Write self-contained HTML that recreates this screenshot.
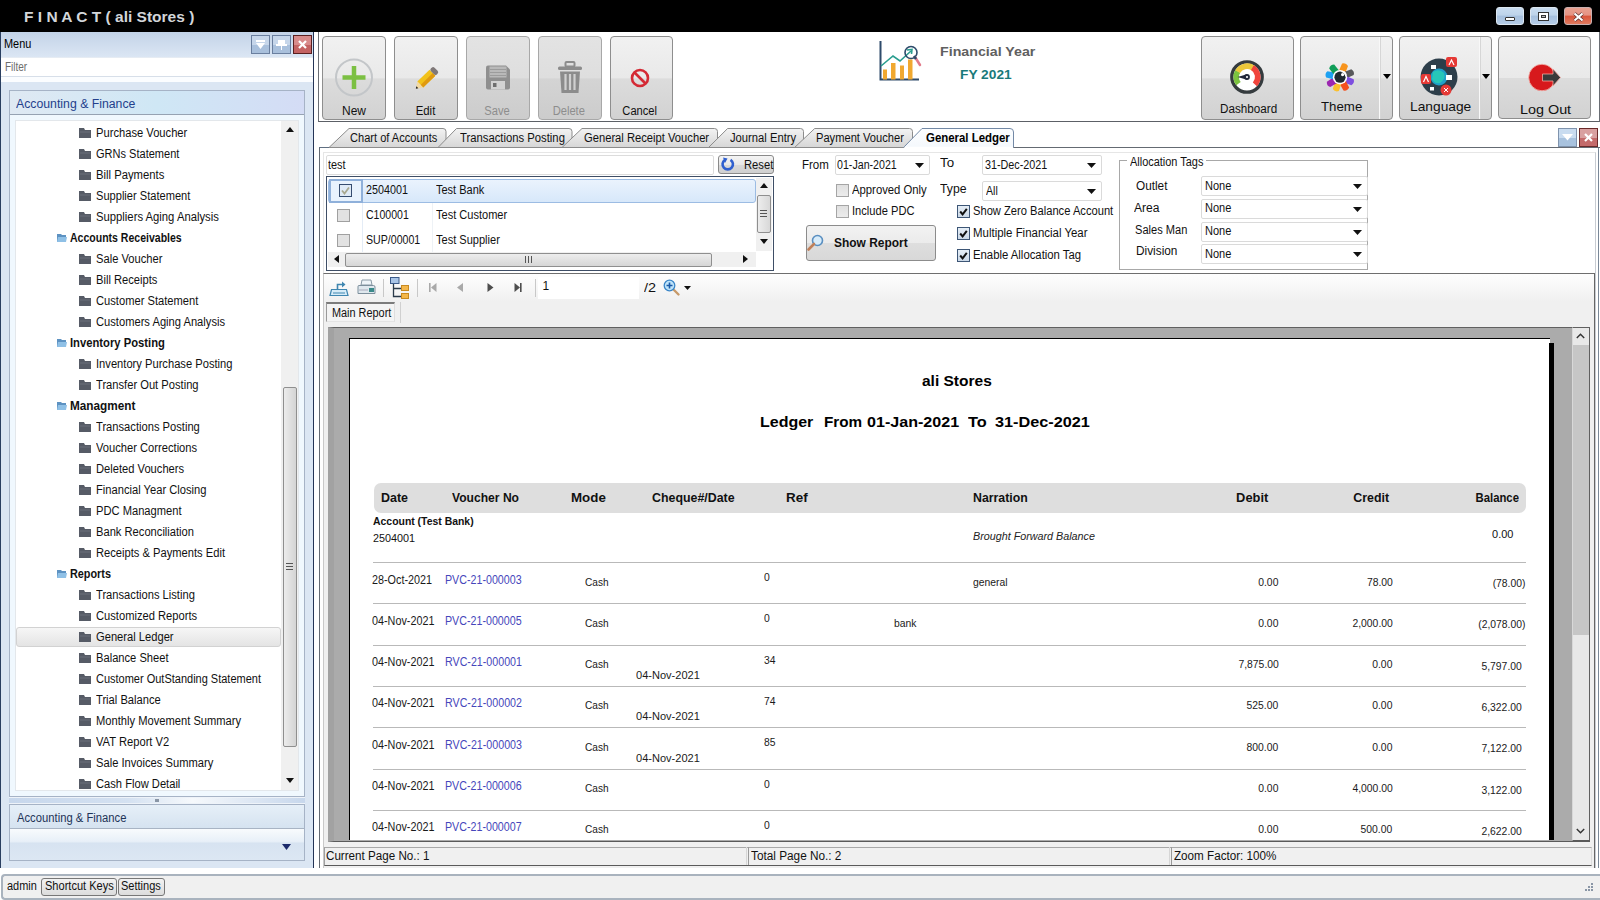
<!DOCTYPE html>
<html><head><meta charset="utf-8">
<style>
*{box-sizing:border-box;margin:0;padding:0}
html,body{width:1600px;height:900px;overflow:hidden;background:#fff;font-family:"Liberation Sans",sans-serif;font-size:12px;color:#000}
.a{position:absolute}
.t{position:absolute;white-space:nowrap;line-height:1;transform-origin:0 50%}
svg{position:absolute;overflow:visible}
</style></head><body>
<div class="a" style="left:0;top:0;width:1600px;height:32px;background:#000"></div>
<div class="t" style="top:9.2px;font-size:15px;font-weight:bold;color:#d3d6da;left:24.0px;transform:scaleX(1.034);">F I N A C T ( ali Stores )</div>
<div class="a" style="left:1496px;top:7px;width:28px;height:18px;border-radius:3px;background:linear-gradient(#c8dcf0 0%,#bdd3ea 45%,#a6c0de 50%,#b4cce6 100%);border:1px solid #dce6f0"></div>
<div class="a" style="left:1505px;top:17px;width:10px;height:4px;background:#fff;border:1px solid #333;border-radius:1px"></div>
<div class="a" style="left:1530px;top:7px;width:28px;height:18px;border-radius:3px;background:linear-gradient(#c8dcf0 0%,#bdd3ea 45%,#a6c0de 50%,#b4cce6 100%);border:1px solid #dce6f0"></div>
<div class="a" style="left:1538px;top:12px;width:11px;height:9px;background:#fff;border:1px solid #333"></div>
<div class="a" style="left:1541px;top:15px;width:5px;height:3px;background:#bbb;border:1px solid #333"></div>
<div class="a" style="left:1564px;top:7px;width:28px;height:18px;border-radius:3px;background:linear-gradient(#e8a090 0%,#e59383 45%,#d9543a 50%,#e07a5e 100%);border:1px solid #c9b0b0"></div>
<svg style="left:1573px;top:12px" width="11" height="10"><path d="M1.5 1.5L9.5 8.5M9.5 1.5L1.5 8.5" stroke="#5a3030" stroke-width="3.6"/><path d="M1.5 1.5L9.5 8.5M9.5 1.5L1.5 8.5" stroke="#fff" stroke-width="2.2"/></svg>
<div class="a" style="left:0;top:32px;width:314px;height:837px;background:#dbe6f3;border-left:1px solid #2a3f60;border-right:1px solid #243456"></div>
<div class="a" style="left:1px;top:32px;width:312px;height:25px;background:linear-gradient(#c3d3e7,#dbe6f4)"></div>
<div class="t" style="top:38.3px;font-size:12px;left:3.5px;transform:scaleX(0.909);">Menu</div>
<div class="a" style="left:251px;top:35px;width:19px;height:19px;background:linear-gradient(#c6d6ea 50%,#a9c0dc 50%);border:1px solid #6a7f9f"></div>
<div class="a" style="left:272px;top:35px;width:19px;height:19px;background:linear-gradient(#c6d6ea 50%,#a9c0dc 50%);border:1px solid #6a7f9f"></div>
<div class="a" style="left:293px;top:35px;width:19px;height:19px;background:linear-gradient(#d88b8b 50%,#c46363 50%);border:1px solid #5a2020"></div>
<div class="a" style="left:256px;top:40px;width:9px;height:2px;background:#fff"></div>
<svg style="left:256px;top:43px" width="9" height="7"><path d="M0 0H9L4.5 6Z" fill="#fff"/></svg>
<div class="a" style="left:278px;top:40px;width:7px;height:4px;background:#fff"></div>
<div class="a" style="left:276px;top:44px;width:11px;height:2px;background:#fff"></div>
<div class="a" style="left:281px;top:46px;width:1px;height:4px;background:#fff"></div>
<svg style="left:298px;top:40px" width="9" height="9"><path d="M1 1L8 8M8 1L1 8" stroke="#fff" stroke-width="2.2"/></svg>
<div class="a" style="left:1px;top:57px;width:312px;height:20px;background:#fff;border-top:1px solid #e6ecf3;border-bottom:1px solid #d7dfe9"></div>
<div class="t" style="top:60.8px;font-size:12px;color:#6d6d6d;left:4.5px;transform:scaleX(0.832);">Filter</div>
<div class="a" style="left:1px;top:77px;width:312px;height:5px;background:#fbfdff"></div>
<div class="a" style="left:9px;top:90px;width:296px;height:707px;background:#f0f8fe;border:1px solid #a6b3c6"></div>
<div class="a" style="left:10px;top:91px;width:294px;height:23px;background:linear-gradient(90deg,#dfe9f3 0%,#cfe7f5 50%,#d4dcf5 100%)"></div>
<div class="a" style="left:10px;top:114px;width:294px;height:1px;background:#96a2b2"></div>
<div class="t" style="top:98.4px;font-size:12.5px;color:#233f8c;left:15.5px;transform:scaleX(0.982);">Accounting &amp; Finance</div>
<div class="a" style="left:15px;top:120px;width:284px;height:671px;background:#fff;border:1px solid #e3e7eb"></div>
<div class="a" style="left:281px;top:121px;width:17px;height:669px;background:#f0f0f0"></div>
<svg style="left:286px;top:127px" width="8" height="5"><path d="M0 5H8L4 0Z" fill="#111"/></svg>
<svg style="left:286px;top:778px" width="8" height="5"><path d="M0 0H8L4 5Z" fill="#111"/></svg>
<div class="a" style="left:283px;top:387px;width:14px;height:360px;background:linear-gradient(90deg,#ececec,#d4d4d4);border:1px solid #8f8f8f;border-radius:2px"></div>
<div class="a" style="left:286px;top:563px;width:7px;height:1px;background:#555"></div>
<div class="a" style="left:286px;top:566px;width:7px;height:1px;background:#555"></div>
<div class="a" style="left:286px;top:569px;width:7px;height:1px;background:#555"></div>
<div class="a" style="left:16px;top:627px;width:265px;height:20px;background:linear-gradient(#f6f6f6,#e4e4e4);border:1px solid #d2d2d2;border-radius:3px"></div>
<svg style="left:79px;top:128px" width="12" height="10"><path d="M0 0H5L6 2H12V10H0Z" fill="#565b66"/><path d="M1 4H11" stroke="#6b707a" stroke-width="1"/></svg>
<div class="t" style="top:126.8px;font-size:12px;color:#111;left:95.5px;transform:scaleX(0.931);">Purchase Voucher</div>
<svg style="left:79px;top:149px" width="12" height="10"><path d="M0 0H5L6 2H12V10H0Z" fill="#565b66"/><path d="M1 4H11" stroke="#6b707a" stroke-width="1"/></svg>
<div class="t" style="top:147.8px;font-size:12px;color:#111;left:95.5px;transform:scaleX(0.919);">GRNs Statement</div>
<svg style="left:79px;top:170px" width="12" height="10"><path d="M0 0H5L6 2H12V10H0Z" fill="#565b66"/><path d="M1 4H11" stroke="#6b707a" stroke-width="1"/></svg>
<div class="t" style="top:168.8px;font-size:12px;color:#111;left:95.5px;transform:scaleX(0.940);">Bill Payments</div>
<svg style="left:79px;top:191px" width="12" height="10"><path d="M0 0H5L6 2H12V10H0Z" fill="#565b66"/><path d="M1 4H11" stroke="#6b707a" stroke-width="1"/></svg>
<div class="t" style="top:189.8px;font-size:12px;color:#111;left:95.5px;transform:scaleX(0.924);">Supplier Statement</div>
<svg style="left:79px;top:212px" width="12" height="10"><path d="M0 0H5L6 2H12V10H0Z" fill="#565b66"/><path d="M1 4H11" stroke="#6b707a" stroke-width="1"/></svg>
<div class="t" style="top:210.8px;font-size:12px;color:#111;left:95.5px;transform:scaleX(0.940);">Suppliers Aging Analysis</div>
<svg style="left:57px;top:234px" width="10" height="8"><path d="M0 0H4L5 1H9V8H0Z" fill="#5d92c2"/><path d="M1 3H10L9 8H0Z" fill="#8fc0e6"/></svg>
<div class="t" style="top:231.8px;font-size:12px;font-weight:bold;color:#111;left:69.5px;transform:scaleX(0.877);">Accounts Receivables</div>
<svg style="left:79px;top:254px" width="12" height="10"><path d="M0 0H5L6 2H12V10H0Z" fill="#565b66"/><path d="M1 4H11" stroke="#6b707a" stroke-width="1"/></svg>
<div class="t" style="top:252.8px;font-size:12px;color:#111;left:95.5px;transform:scaleX(0.930);">Sale Voucher</div>
<svg style="left:79px;top:275px" width="12" height="10"><path d="M0 0H5L6 2H12V10H0Z" fill="#565b66"/><path d="M1 4H11" stroke="#6b707a" stroke-width="1"/></svg>
<div class="t" style="top:273.8px;font-size:12px;color:#111;left:95.5px;transform:scaleX(0.930);">Bill Receipts</div>
<svg style="left:79px;top:296px" width="12" height="10"><path d="M0 0H5L6 2H12V10H0Z" fill="#565b66"/><path d="M1 4H11" stroke="#6b707a" stroke-width="1"/></svg>
<div class="t" style="top:294.8px;font-size:12px;color:#111;left:95.5px;transform:scaleX(0.930);">Customer Statement</div>
<svg style="left:79px;top:317px" width="12" height="10"><path d="M0 0H5L6 2H12V10H0Z" fill="#565b66"/><path d="M1 4H11" stroke="#6b707a" stroke-width="1"/></svg>
<div class="t" style="top:315.8px;font-size:12px;color:#111;left:95.5px;transform:scaleX(0.930);">Customers Aging Analysis</div>
<svg style="left:57px;top:339px" width="10" height="8"><path d="M0 0H4L5 1H9V8H0Z" fill="#5d92c2"/><path d="M1 3H10L9 8H0Z" fill="#8fc0e6"/></svg>
<div class="t" style="top:336.8px;font-size:12px;font-weight:bold;color:#111;left:69.5px;transform:scaleX(0.936);">Inventory Posting</div>
<svg style="left:79px;top:359px" width="12" height="10"><path d="M0 0H5L6 2H12V10H0Z" fill="#565b66"/><path d="M1 4H11" stroke="#6b707a" stroke-width="1"/></svg>
<div class="t" style="top:357.8px;font-size:12px;color:#111;left:95.5px;transform:scaleX(0.930);">Inventory Purchase Posting</div>
<svg style="left:79px;top:380px" width="12" height="10"><path d="M0 0H5L6 2H12V10H0Z" fill="#565b66"/><path d="M1 4H11" stroke="#6b707a" stroke-width="1"/></svg>
<div class="t" style="top:378.8px;font-size:12px;color:#111;left:95.5px;transform:scaleX(0.930);">Transfer Out Posting</div>
<svg style="left:57px;top:402px" width="10" height="8"><path d="M0 0H4L5 1H9V8H0Z" fill="#5d92c2"/><path d="M1 3H10L9 8H0Z" fill="#8fc0e6"/></svg>
<div class="t" style="top:399.8px;font-size:12px;font-weight:bold;color:#111;left:69.5px;transform:scaleX(0.981);">Managment</div>
<svg style="left:79px;top:422px" width="12" height="10"><path d="M0 0H5L6 2H12V10H0Z" fill="#565b66"/><path d="M1 4H11" stroke="#6b707a" stroke-width="1"/></svg>
<div class="t" style="top:420.8px;font-size:12px;color:#111;left:95.5px;transform:scaleX(0.930);">Transactions Posting</div>
<svg style="left:79px;top:443px" width="12" height="10"><path d="M0 0H5L6 2H12V10H0Z" fill="#565b66"/><path d="M1 4H11" stroke="#6b707a" stroke-width="1"/></svg>
<div class="t" style="top:441.8px;font-size:12px;color:#111;left:95.5px;transform:scaleX(0.930);">Voucher Corrections</div>
<svg style="left:79px;top:464px" width="12" height="10"><path d="M0 0H5L6 2H12V10H0Z" fill="#565b66"/><path d="M1 4H11" stroke="#6b707a" stroke-width="1"/></svg>
<div class="t" style="top:462.8px;font-size:12px;color:#111;left:95.5px;transform:scaleX(0.930);">Deleted Vouchers</div>
<svg style="left:79px;top:485px" width="12" height="10"><path d="M0 0H5L6 2H12V10H0Z" fill="#565b66"/><path d="M1 4H11" stroke="#6b707a" stroke-width="1"/></svg>
<div class="t" style="top:483.8px;font-size:12px;color:#111;left:95.5px;transform:scaleX(0.930);">Financial Year Closing</div>
<svg style="left:79px;top:506px" width="12" height="10"><path d="M0 0H5L6 2H12V10H0Z" fill="#565b66"/><path d="M1 4H11" stroke="#6b707a" stroke-width="1"/></svg>
<div class="t" style="top:504.8px;font-size:12px;color:#111;left:95.5px;transform:scaleX(0.930);">PDC Managment</div>
<svg style="left:79px;top:527px" width="12" height="10"><path d="M0 0H5L6 2H12V10H0Z" fill="#565b66"/><path d="M1 4H11" stroke="#6b707a" stroke-width="1"/></svg>
<div class="t" style="top:525.8px;font-size:12px;color:#111;left:95.5px;transform:scaleX(0.930);">Bank Reconciliation</div>
<svg style="left:79px;top:548px" width="12" height="10"><path d="M0 0H5L6 2H12V10H0Z" fill="#565b66"/><path d="M1 4H11" stroke="#6b707a" stroke-width="1"/></svg>
<div class="t" style="top:546.8px;font-size:12px;color:#111;left:95.5px;transform:scaleX(0.930);">Receipts &amp; Payments Edit</div>
<svg style="left:57px;top:570px" width="10" height="8"><path d="M0 0H4L5 1H9V8H0Z" fill="#5d92c2"/><path d="M1 3H10L9 8H0Z" fill="#8fc0e6"/></svg>
<div class="t" style="top:567.8px;font-size:12px;font-weight:bold;color:#111;left:69.5px;transform:scaleX(0.904);">Reports</div>
<svg style="left:79px;top:590px" width="12" height="10"><path d="M0 0H5L6 2H12V10H0Z" fill="#565b66"/><path d="M1 4H11" stroke="#6b707a" stroke-width="1"/></svg>
<div class="t" style="top:588.8px;font-size:12px;color:#111;left:95.5px;transform:scaleX(0.930);">Transactions Listing</div>
<svg style="left:79px;top:611px" width="12" height="10"><path d="M0 0H5L6 2H12V10H0Z" fill="#565b66"/><path d="M1 4H11" stroke="#6b707a" stroke-width="1"/></svg>
<div class="t" style="top:609.8px;font-size:12px;color:#111;left:95.5px;transform:scaleX(0.930);">Customized Reports</div>
<svg style="left:79px;top:632px" width="12" height="10"><path d="M0 0H5L6 2H12V10H0Z" fill="#565b66"/><path d="M1 4H11" stroke="#6b707a" stroke-width="1"/></svg>
<div class="t" style="top:630.8px;font-size:12px;color:#111;left:95.5px;transform:scaleX(0.930);">General Ledger</div>
<svg style="left:79px;top:653px" width="12" height="10"><path d="M0 0H5L6 2H12V10H0Z" fill="#565b66"/><path d="M1 4H11" stroke="#6b707a" stroke-width="1"/></svg>
<div class="t" style="top:651.8px;font-size:12px;color:#111;left:95.5px;transform:scaleX(0.930);">Balance Sheet</div>
<svg style="left:79px;top:674px" width="12" height="10"><path d="M0 0H5L6 2H12V10H0Z" fill="#565b66"/><path d="M1 4H11" stroke="#6b707a" stroke-width="1"/></svg>
<div class="t" style="top:672.8px;font-size:12px;color:#111;left:95.5px;transform:scaleX(0.916);">Customer OutStanding Statement</div>
<svg style="left:79px;top:695px" width="12" height="10"><path d="M0 0H5L6 2H12V10H0Z" fill="#565b66"/><path d="M1 4H11" stroke="#6b707a" stroke-width="1"/></svg>
<div class="t" style="top:693.8px;font-size:12px;color:#111;left:95.5px;transform:scaleX(0.930);">Trial Balance</div>
<svg style="left:79px;top:716px" width="12" height="10"><path d="M0 0H5L6 2H12V10H0Z" fill="#565b66"/><path d="M1 4H11" stroke="#6b707a" stroke-width="1"/></svg>
<div class="t" style="top:714.8px;font-size:12px;color:#111;left:95.5px;transform:scaleX(0.930);">Monthly Movement Summary</div>
<svg style="left:79px;top:737px" width="12" height="10"><path d="M0 0H5L6 2H12V10H0Z" fill="#565b66"/><path d="M1 4H11" stroke="#6b707a" stroke-width="1"/></svg>
<div class="t" style="top:735.8px;font-size:12px;color:#111;left:95.5px;transform:scaleX(0.930);">VAT Report V2</div>
<svg style="left:79px;top:758px" width="12" height="10"><path d="M0 0H5L6 2H12V10H0Z" fill="#565b66"/><path d="M1 4H11" stroke="#6b707a" stroke-width="1"/></svg>
<div class="t" style="top:756.8px;font-size:12px;color:#111;left:95.5px;transform:scaleX(0.930);">Sale Invoices Summary</div>
<svg style="left:79px;top:779px" width="12" height="10"><path d="M0 0H5L6 2H12V10H0Z" fill="#565b66"/><path d="M1 4H11" stroke="#6b707a" stroke-width="1"/></svg>
<div class="t" style="top:777.8px;font-size:12px;color:#111;left:95.5px;transform:scaleX(0.930);">Cash Flow Detail</div>
<div class="a" style="left:9px;top:797px;width:296px;height:7px;background:linear-gradient(90deg,#c7d7ec 0%,#d4e1f1 40%,#f6f9fc 62%,#c7d7ec 100%);border-top:1px solid #eef3f9;border-bottom:1px solid #eef3f9"></div>
<div class="a" style="left:155px;top:799px;width:4px;height:3px;background:#8a96a6"></div>
<div class="a" style="left:9px;top:804px;width:296px;height:57px;background:#eef4fa;border:1px solid #a6b3c6"></div>
<div class="a" style="left:10px;top:805px;width:294px;height:23px;background:linear-gradient(#e6eff8,#d5e3f0)"></div>
<div class="a" style="left:10px;top:828px;width:294px;height:1px;background:#a8b4c4"></div>
<div class="a" style="left:10px;top:829px;width:294px;height:31px;background:linear-gradient(#f8fbfd 0%,#e8f0f8 40%,#d7e3f1 46%,#dce7f3 100%)"></div>
<div class="t" style="top:811.8px;font-size:12px;color:#1e3458;left:16.5px;transform:scaleX(0.937);">Accounting &amp; Finance</div>
<svg style="left:282px;top:844px" width="9" height="6"><path d="M0 0H9L4.5 6Z" fill="#1b2a6b"/></svg>
<div class="a" style="left:0;top:868px;width:1600px;height:7px;background:#fff"></div>
<div class="a" style="left:1px;top:874px;width:1599px;height:26px;background:#f0f0f0;border:2px solid #a9b3be;border-right:none;border-radius:4px 0 0 4px"></div>
<div class="t" style="top:879.8px;font-size:12px;color:#111;left:7.0px;transform:scaleX(0.912);">admin</div>
<div class="a" style="left:41px;top:878px;width:76px;height:18px;background:linear-gradient(#f2f2f2,#dcdcdc);border:1px solid #777;border-radius:3px"></div>
<div class="t" style="top:879.8px;font-size:12px;color:#111;left:45.0px;transform:scaleX(0.921);">Shortcut Keys</div>
<div class="a" style="left:118px;top:878px;width:47px;height:18px;background:linear-gradient(#f2f2f2,#dcdcdc);border:1px solid #777;border-radius:3px"></div>
<div class="t" style="top:879.8px;font-size:12px;color:#111;left:121.0px;transform:scaleX(0.918);">Settings</div>
<svg style="left:1584px;top:882px" width="10" height="10"><g fill="#8a96a6"><rect x="7" y="1" width="2" height="2"/><rect x="4" y="4" width="2" height="2"/><rect x="7" y="4" width="2" height="2"/><rect x="1" y="7" width="2" height="2"/><rect x="4" y="7" width="2" height="2"/><rect x="7" y="7" width="2" height="2"/></g></svg>
<div class="a" style="left:318px;top:32px;width:1282px;height:90px;background:#fff;border-left:1px solid #6a6e74;border-bottom:1px solid #5c6066;border-right:1px solid #6a6e74"></div>
<div class="a" style="left:322px;top:36px;width:64px;height:84px;border:1px solid #8e8e8e;border-radius:4px;background:linear-gradient(#f1f1f1 0%,#e9e9e9 50%,#dcdcdc 51%,#d2d2d2 100%)"></div>
<div class="a" style="left:394px;top:36px;width:64px;height:84px;border:1px solid #8e8e8e;border-radius:4px;background:linear-gradient(#f1f1f1 0%,#e9e9e9 50%,#dcdcdc 51%,#d2d2d2 100%)"></div>
<div class="a" style="left:466px;top:36px;width:64px;height:84px;border:1px solid #a8a8a8;border-radius:4px;background:linear-gradient(#e3e3e3 0%,#dedede 50%,#d4d4d4 51%,#cccccc 100%)"></div>
<div class="a" style="left:538px;top:36px;width:64px;height:84px;border:1px solid #a8a8a8;border-radius:4px;background:linear-gradient(#e3e3e3 0%,#dedede 50%,#d4d4d4 51%,#cccccc 100%)"></div>
<div class="a" style="left:610px;top:36px;width:63px;height:84px;border:1px solid #8e8e8e;border-radius:4px;background:linear-gradient(#f1f1f1 0%,#e9e9e9 50%,#dcdcdc 51%,#d2d2d2 100%)"></div>
<svg style="left:334px;top:58px" width="40" height="40"><circle cx="20" cy="19.5" r="18" fill="none" stroke="#c3c6c9" stroke-width="2"/><path d="M20 8V31M8.5 19.5H31.5" stroke="#7cc043" stroke-width="4.5"/></svg>
<div class="t" style="top:104.8px;font-size:12px;color:#111;left:342.0px;transform:scaleX(0.997);">New</div>
<svg style="left:410px;top:64px" width="32" height="30"><g transform="translate(16 15) rotate(-44)"><rect x="-8" y="-4.2" width="17" height="8.4" fill="#f2c21a"/><rect x="-8" y="0.5" width="17" height="3.7" fill="#e09a10"/><rect x="9" y="-4.2" width="5" height="8.4" rx="2" fill="#7f7878"/><path d="M-8 -4.2L-14 0L-8 4.2Z" fill="#f3d9a0"/><path d="M-12 -1.4L-14.2 0L-12 1.4Z" fill="#222"/></g></svg>
<div class="t" style="top:104.8px;font-size:12px;color:#111;left:425.5px;transform:translateX(-50%) scaleX(0.950);transform-origin:0 50%;">Edit</div>
<svg style="left:486px;top:65px" width="25" height="25"><path d="M0 2.5Q0 0.5 2 0.5H20L24 4.5V22.5Q24 24.5 22 24.5H2Q0 24.5 0 22.5Z" fill="#8f8f8f"/><rect x="3.5" y="1.5" width="17" height="11" fill="#b9b9b9"/><path d="M4 4.5H20M4 7.5H20M4 10.5H20" stroke="#9c9c9c" stroke-width="1"/><rect x="5" y="16" width="14" height="8.5" fill="#d2d2d2"/><rect x="7" y="18" width="3.5" height="4" fill="#6e6e6e"/></svg>
<div class="t" style="top:104.8px;font-size:12px;color:#8d8d8d;left:497.5px;transform:translateX(-50%) scaleX(0.930);transform-origin:0 50%;">Save</div>
<svg style="left:557px;top:61px" width="26" height="33"><rect x="8.5" y="1" width="9" height="4.5" rx="1" fill="none" stroke="#8c8c8c" stroke-width="2"/><rect x="1" y="5.5" width="24" height="3.5" rx="1.5" fill="#8c8c8c"/><path d="M3 10.5H23L21.5 32H4.5Z" fill="#8c8c8c"/><path d="M8.5 13V29M13 13V29M17.5 13V29" stroke="#d0d0d0" stroke-width="2.2"/></svg>
<div class="t" style="top:104.8px;font-size:12px;color:#8d8d8d;left:569.5px;transform:translateX(-50%) scaleX(0.930);transform-origin:0 50%;">Delete</div>
<svg style="left:630px;top:68px" width="20" height="20"><circle cx="10" cy="10" r="8" fill="none" stroke="#d42a35" stroke-width="2.6"/><path d="M4.5 4.5L15.5 15.5" stroke="#d42a35" stroke-width="2.6"/></svg>
<div class="t" style="top:104.8px;font-size:12px;color:#111;left:641.0px;transform:translateX(-50%) scaleX(0.930);transform-origin:0 50%;">Cancel</div>
<svg style="left:878px;top:40px" width="46" height="42">
<path d="M2.5 1V39.5H41" fill="none" stroke="#2e4b6b" stroke-width="2"/>
<rect x="5" y="29.5" width="4" height="10" fill="#f0a830"/><rect x="13" y="23" width="4.5" height="16.5" fill="#f0a830"/><rect x="22" y="25.5" width="4" height="14" fill="#f0a830"/><rect x="30" y="19.5" width="4.5" height="20" fill="#f0a830"/>
<path d="M3 26L15 16L22 21L33 11" fill="none" stroke="#2a9d8f" stroke-width="1.6"/><path d="M29 10L34 9.5L33.5 14" fill="none" stroke="#2a9d8f" stroke-width="1.6"/>
<circle cx="33" cy="12.5" r="6" fill="none" stroke="#2e4b6b" stroke-width="1.6"/>
<path d="M37 17L42 25" stroke="#e27a8a" stroke-width="2.5" stroke-linecap="round"/><path d="M36 16L38 19" stroke="#2e4b6b" stroke-width="2.5"/>
</svg>
<div class="t" style="top:45.2px;font-size:13px;font-weight:bold;color:#606060;left:939.5px;transform:scaleX(1.093);">Financial Year</div>
<div class="t" style="top:67.5px;font-size:13px;font-weight:bold;color:#187a7a;left:960.3px;transform:scaleX(1.056);">FY 2021</div>
<div class="a" style="left:1201px;top:36px;width:93px;height:84px;border:1px solid #8e8e8e;border-radius:4px;background:linear-gradient(#f1f1f1 0%,#e9e9e9 50%,#dcdcdc 51%,#d2d2d2 100%)"></div>
<div class="a" style="left:1300px;top:36px;width:93px;height:84px;border:1px solid #8e8e8e;border-radius:4px;background:linear-gradient(#f1f1f1 0%,#e9e9e9 50%,#dcdcdc 51%,#d2d2d2 100%)"></div>
<div class="a" style="left:1379px;top:37px;width:1px;height:82px;background:#f8f8f8"></div>
<div class="a" style="left:1380px;top:37px;width:1px;height:82px;background:#d6d6d6"></div>
<div class="a" style="left:1399px;top:36px;width:93px;height:84px;border:1px solid #8e8e8e;border-radius:4px;background:linear-gradient(#f1f1f1 0%,#e9e9e9 50%,#dcdcdc 51%,#d2d2d2 100%)"></div>
<div class="a" style="left:1479px;top:37px;width:1px;height:82px;background:#f8f8f8"></div>
<div class="a" style="left:1480px;top:37px;width:1px;height:82px;background:#d6d6d6"></div>
<div class="a" style="left:1498px;top:36px;width:93px;height:83px;border:1px solid #8e8e8e;border-radius:4px;background:linear-gradient(#f1f1f1 0%,#e9e9e9 50%,#dcdcdc 51%,#d2d2d2 100%)"></div>
<svg style="left:1229px;top:59px" width="36" height="36">
<circle cx="18" cy="18" r="15.2" fill="#fff" stroke="#353b3e" stroke-width="3.3"/>
<path d="M9.49 24.65A10.8 10.8 0 0 1 8.84 12.28" fill="none" stroke="#7cc33f" stroke-width="5.6"/>
<path d="M8.65 12.60A10.8 10.8 0 0 1 24.19 9.15" fill="none" stroke="#ecc83a" stroke-width="5.6"/>
<path d="M23.40 8.65A10.8 10.8 0 0 1 25.90 25.37" fill="none" stroke="#f0443c" stroke-width="5.6"/>
<path d="M18 15.2L8.5 18L18 20.8Z" fill="#22283a"/><circle cx="18" cy="18" r="2.9" fill="#22283a"/><circle cx="18" cy="18" r="1.1" fill="#fff"/>
</svg>
<div class="t" style="top:102.5px;font-size:12px;color:#111;left:1220.1px;transform:scaleX(0.974);">Dashboard</div>
<svg style="left:1322px;top:59px" width="38" height="36"><g transform="translate(18 18.2)">
<path d="M-3.4 -5 L-3.2 -13.5 Q0 -16 3.2 -13.5 L3.4 -5Z" fill="#f7941d" transform="rotate(22)"/>
<path d="M-3.4 -5 L-3.2 -13.5 Q0 -16 3.2 -13.5 L3.4 -5Z" fill="#58595b" transform="rotate(68)"/>
<path d="M-3.4 -5 L-3.2 -13.5 Q0 -16 3.2 -13.5 L3.4 -5Z" fill="#7e4fe0" transform="rotate(112)"/>
<path d="M-3.4 -5 L-3.2 -13.5 Q0 -16 3.2 -13.5 L3.4 -5Z" fill="#f4511e" transform="rotate(152)"/>
<path d="M-3.4 -5 L-3.2 -13.5 Q0 -16 3.2 -13.5 L3.4 -5Z" fill="#fbc02d" transform="rotate(198)"/>
<path d="M-3.4 -5 L-3.2 -13.5 Q0 -16 3.2 -13.5 L3.4 -5Z" fill="#9c27b0" transform="rotate(238)"/>
<path d="M-3.4 -5 L-3.2 -13.5 Q0 -16 3.2 -13.5 L3.4 -5Z" fill="#1da1f2" transform="rotate(282)"/>
<path d="M-3.4 -5 L-3.2 -13.5 Q0 -16 3.2 -13.5 L3.4 -5Z" fill="#109d58" transform="rotate(322)"/>
<circle r="7.2" fill="#fff"/><circle r="5.6" fill="#1f2a30"/><path d="M1 -5.2A5 5 0 0 1 5.2 -0.5A3 3 0 0 0 1 -5.2Z" fill="#fff"/><circle cx="2.6" cy="-2.6" r="1.6" fill="#fff"/>
</g></svg>
<div class="t" style="top:99.5px;font-size:13px;color:#111;left:1320.8px;transform:scaleX(1.020);">Theme</div>
<svg style="left:1383px;top:74px" width="8" height="5"><path d="M0 0H8L4 5Z" fill="#000"/></svg>
<svg style="left:1420px;top:57px" width="40" height="40">
<circle cx="19" cy="20" r="18.5" fill="#2d3e4a"/>
<circle cx="19" cy="20" r="8.5" fill="#1f9fc8"/><path d="M13 15Q19 11 24 16Q26 22 20 26Q14 27 12 22Z" fill="#27c6b8"/>
<rect x="26" y="0" width="11" height="10" rx="2" fill="#e53935"/><path d="M29 8L31.5 3L34 8" stroke="#fff" stroke-width="1.2" fill="none"/>
<rect x="1" y="17" width="10" height="10" rx="2" fill="#e53935"/><path d="M3.5 25L6 19.5L8.5 25" stroke="#fff" stroke-width="1.2" fill="none"/>
<circle cx="26" cy="33" r="5.5" fill="#e53935"/><path d="M24 31L28 35M28 31L24 35" stroke="#fff" stroke-width="1"/>
<rect x="11" y="8" width="5" height="4" fill="#fff"/><rect x="26" y="18" width="6" height="5" fill="#fff"/><rect x="10" y="30" width="4" height="3.5" fill="#fff"/>
</svg>
<div class="t" style="top:100.0px;font-size:13px;color:#111;left:1409.9px;transform:scaleX(1.059);">Language</div>
<svg style="left:1482px;top:74px" width="8" height="5"><path d="M0 0H8L4 5Z" fill="#000"/></svg>
<svg style="left:1527px;top:62px" width="36" height="32">
<circle cx="15" cy="15.5" r="13.3" fill="#d7191c" stroke="#f2b8b0" stroke-width="0.8"/>
<path d="M15.5 12H26V7L33.5 15.5L26 24V19H15.5Z" fill="#3a3a3a" stroke="#f0a8a0" stroke-width="0.8"/>
</svg>
<div class="t" style="top:102.5px;font-size:13px;color:#111;left:1519.5px;transform:scaleX(1.105);">Log Out</div>
<div class="a" style="left:1558px;top:128px;width:19px;height:19px;background:linear-gradient(#c9dcf0 50%,#a8c2de 50%);border:1px solid #7f93ad"></div>
<svg style="left:1562px;top:134px" width="11" height="7"><path d="M0 0H11L5.5 6.5Z" fill="#fff"/></svg>
<div class="a" style="left:1579px;top:128px;width:19px;height:19px;background:linear-gradient(#d9a0a0 50%,#c46a6a 50%);border:1px solid #6a2a2a"></div>
<svg style="left:1584px;top:133px" width="9" height="9"><path d="M1 1L8 8M8 1L1 8" stroke="#fff" stroke-width="2.2"/></svg>
<div class="a" style="left:319px;top:147px;width:1280px;height:721px;background:#fff;border-left:1px solid #646a72;border-top:1px solid #646a72;border-right:1px solid #7a8898"></div>
<div class="a" style="left:323px;top:152px;width:1273px;height:716px;border-left:1px solid #e6e6e6;border-top:1px solid #e6e6e6;border-right:1px solid #c8ccd2"></div>
<svg style="left:0;top:0" width="1600" height="160"><path d="M329 147.5 L349 128.5 H443 Q446 128.5 446 131.5 V147.5 Z" fill="url(#tg)" stroke="#8c8c8c" stroke-width="1"/><path d="M438 147.5 L456.5 128.5 H569 Q572 128.5 572 131.5 V147.5 Z" fill="url(#tg)" stroke="#8c8c8c" stroke-width="1"/><path d="M562 147.5 L582 128.5 H714.5 Q717.5 128.5 717.5 131.5 V147.5 Z" fill="url(#tg)" stroke="#8c8c8c" stroke-width="1"/><path d="M708.5 147.5 L727.6 128.5 H800.5 Q803.5 128.5 803.5 131.5 V147.5 Z" fill="url(#tg)" stroke="#8c8c8c" stroke-width="1"/><path d="M794.6 147.5 L814.7 128.5 H909.5 Q912.5 128.5 912.5 131.5 V147.5 Z" fill="url(#tg)" stroke="#8c8c8c" stroke-width="1"/><path d="M1013.5 147.5 H1600" stroke="#646a72" stroke-width="1"/><path d="M903.5 147.5 L922 128.5 H1010 Q1013.5 128.5 1013.5 132 V147.5" fill="url(#tw)" stroke="#7389a6" stroke-width="1"/><path d="M904.5 147.5 H1013" stroke="#fff" stroke-width="1.5"/><defs><linearGradient id="tg" x1="0" y1="0" x2="0" y2="1"><stop offset="0" stop-color="#f3f3f3"/><stop offset="1" stop-color="#d6d6d6"/></linearGradient><linearGradient id="tw" x1="0" y1="0" x2="0" y2="1"><stop offset="0" stop-color="#fdfeff"/><stop offset="1" stop-color="#f4f8fc"/></linearGradient></defs></svg>
<div class="a" style="left:319px;top:147px;width:10px;height:1px;background:#5f6f82"></div>
<div class="t" style="top:131.8px;font-size:12px;color:#111;left:350.1px;transform:scaleX(0.922);">Chart of Accounts</div>
<div class="t" style="top:131.8px;font-size:12px;color:#111;left:459.5px;transform:scaleX(0.940);">Transactions Posting</div>
<div class="t" style="top:131.8px;font-size:12px;color:#111;left:584.2px;transform:scaleX(0.933);">General Receipt Voucher</div>
<div class="t" style="top:131.8px;font-size:12px;color:#111;left:730.3px;transform:scaleX(0.936);">Journal Entry</div>
<div class="t" style="top:131.8px;font-size:12px;color:#111;left:815.9px;transform:scaleX(0.928);">Payment Voucher</div>
<div class="t" style="top:131.6px;font-size:12px;font-weight:bold;color:#000;left:925.5px;transform:scaleX(0.952);">General Ledger</div>
<div class="a" style="left:326px;top:155px;width:388px;height:20px;background:#fff;border:1px solid #dcdcdc;border-radius:2px"></div>
<div class="t" style="top:158.8px;font-size:12px;color:#111;left:328.2px;transform:scaleX(0.910);">test</div>
<div class="a" style="left:718px;top:155px;width:56px;height:19px;background:linear-gradient(#f4f4f4 0%,#e8e8e8 50%,#d9d9d9 51%,#d0d0d0 100%);border:1px solid #8a8a8a;border-radius:3px"></div>
<svg style="left:721px;top:157px" width="14" height="14"><path d="M9.5 2.8A5.2 5.2 0 1 1 4 2.8" fill="none" stroke="#2f5fcf" stroke-width="2.6"/><path d="M2 0.5L6.5 1.5L4 6Z" fill="#2f5fcf"/></svg>
<div class="t" style="top:158.8px;font-size:12px;color:#111;left:743.5px;transform:scaleX(0.936);">Reset</div>
<div class="a" style="left:326px;top:176px;width:448px;height:95px;background:#fff;border:1px solid #3e4e66"></div>
<div class="a" style="left:328px;top:179px;width:428px;height:24px;background:linear-gradient(#eaf3fd,#d7e8fa);border:1px solid #9cbce3;border-radius:3px"></div>
<div class="a" style="left:329px;top:179px;width:34px;height:24px;background:#e8f2fd;border:2px solid #8fb0da"></div>
<div class="a" style="left:362px;top:203px;width:1px;height:49px;background:#e4ecf6"></div>
<div class="a" style="left:432px;top:203px;width:1px;height:49px;background:#eef2f6"></div>
<div class="a" style="left:339px;top:184px;width:13px;height:13px;background:#dfeaf6;border:1.5px solid #354c70"></div>
<svg style="left:341px;top:186px" width="9" height="9"><path d="M1 4.5L3.5 7.5L8 1.5" fill="none" stroke="#a8a890" stroke-width="1.8"/></svg>
<div class="a" style="left:337px;top:209px;width:13px;height:13px;background:#e2e2e2;border:1px solid #a0a0a0"></div>
<div class="a" style="left:337px;top:234px;width:13px;height:13px;background:#e2e2e2;border:1px solid #a0a0a0"></div>
<div class="t" style="top:183.8px;font-size:12px;color:#111;left:365.9px;transform:scaleX(0.897);">2504001</div>
<div class="t" style="top:183.8px;font-size:12px;color:#111;left:436.2px;transform:scaleX(0.917);">Test Bank</div>
<div class="t" style="top:208.8px;font-size:12px;color:#111;left:365.9px;transform:scaleX(0.878);">C100001</div>
<div class="t" style="top:208.8px;font-size:12px;color:#111;left:436.2px;transform:scaleX(0.920);">Test Customer</div>
<div class="t" style="top:233.8px;font-size:12px;color:#111;left:365.9px;transform:scaleX(0.884);">SUP/00001</div>
<div class="t" style="top:233.8px;font-size:12px;color:#111;left:436.2px;transform:scaleX(0.920);">Test Supplier</div>
<div class="a" style="left:756px;top:178px;width:16px;height:73px;background:#f0f0f0"></div>
<svg style="left:760px;top:183px" width="8" height="5"><path d="M0 5H8L4 0Z" fill="#111"/></svg>
<svg style="left:760px;top:239px" width="8" height="5"><path d="M0 0H8L4 5Z" fill="#111"/></svg>
<div class="a" style="left:757px;top:195px;width:14px;height:38px;background:linear-gradient(90deg,#ededed,#d8d8d8);border:1px solid #8f8f8f;border-radius:2px"></div>
<div class="a" style="left:760px;top:210px;width:7px;height:1px;background:#555"></div>
<div class="a" style="left:760px;top:213px;width:7px;height:1px;background:#555"></div>
<div class="a" style="left:760px;top:216px;width:7px;height:1px;background:#555"></div>
<div class="a" style="left:328px;top:252px;width:428px;height:15px;background:#f0f0f0"></div>
<svg style="left:334px;top:255px" width="5" height="8"><path d="M5 0V8L0 4Z" fill="#111"/></svg>
<svg style="left:743px;top:255px" width="5" height="8"><path d="M0 0V8L5 4Z" fill="#111"/></svg>
<div class="a" style="left:345px;top:253px;width:367px;height:14px;background:linear-gradient(#ededed,#d6d6d6);border:1px solid #8f8f8f;border-radius:2px"></div>
<div class="a" style="left:525px;top:256px;width:1px;height:7px;background:#555"></div>
<div class="a" style="left:528px;top:256px;width:1px;height:7px;background:#555"></div>
<div class="a" style="left:531px;top:256px;width:1px;height:7px;background:#555"></div>
<div class="t" style="top:159.3px;font-size:12px;color:#111;left:801.8px;transform:scaleX(0.960);">From</div>
<div class="a" style="left:835px;top:155px;width:95px;height:20px;background:#fff;border:1px solid #dadada;border-radius:2px"></div>
<svg style="left:915px;top:163.0px" width="9" height="5"><path d="M0 0H9L4.5 5Z" fill="#111"/></svg>
<div class="t" style="top:159.3px;font-size:12px;color:#111;left:837.3px;transform:scaleX(0.887);">01-Jan-2021</div>
<div class="t" style="top:156.8px;font-size:12px;color:#111;left:939.9px;transform:scaleX(1.111);">To</div>
<div class="a" style="left:982px;top:155px;width:120px;height:20px;background:#fff;border:1px solid #dadada;border-radius:2px"></div>
<svg style="left:1087px;top:163.0px" width="9" height="5"><path d="M0 0H9L4.5 5Z" fill="#111"/></svg>
<div class="t" style="top:159.3px;font-size:12px;color:#111;left:984.5px;transform:scaleX(0.898);">31-Dec-2021</div>
<div class="t" style="top:183.4px;font-size:12px;color:#111;left:939.9px;transform:scaleX(1.017);">Type</div>
<div class="a" style="left:982px;top:181px;width:120px;height:20px;background:#fff;border:1px solid #dadada;border-radius:2px"></div>
<svg style="left:1087px;top:189.0px" width="9" height="5"><path d="M0 0H9L4.5 5Z" fill="#111"/></svg>
<div class="t" style="top:184.8px;font-size:12px;color:#111;left:986.1px;transform:scaleX(0.882);">All</div>
<div class="a" style="left:836px;top:184px;width:13px;height:13px;background:linear-gradient(#e0e0e0,#ececec);border:1px solid #a5a5a5"></div>
<div class="t" style="top:183.8px;font-size:12px;color:#111;left:851.5px;transform:scaleX(0.942);">Approved Only</div>
<div class="a" style="left:836px;top:205px;width:13px;height:13px;background:linear-gradient(#e0e0e0,#ececec);border:1px solid #a5a5a5"></div>
<div class="t" style="top:204.6px;font-size:12px;color:#111;left:851.5px;transform:scaleX(0.928);">Include PDC</div>
<div class="a" style="left:957px;top:205px;width:13px;height:13px;background:linear-gradient(#e6eef6,#cbd9e8);border:1px solid #3d5676"></div>
<svg style="left:959px;top:207px" width="9" height="9"><path d="M1.2 4.5L3.6 7.3L7.8 1.8" fill="none" stroke="#111" stroke-width="2"/></svg>
<div class="t" style="top:204.6px;font-size:12px;color:#111;left:972.7px;transform:scaleX(0.930);">Show Zero Balance Account</div>
<div class="a" style="left:957px;top:227px;width:13px;height:13px;background:linear-gradient(#e6eef6,#cbd9e8);border:1px solid #3d5676"></div>
<svg style="left:959px;top:229px" width="9" height="9"><path d="M1.2 4.5L3.6 7.3L7.8 1.8" fill="none" stroke="#111" stroke-width="2"/></svg>
<div class="t" style="top:226.9px;font-size:12px;color:#111;left:972.7px;transform:scaleX(0.954);">Multiple Financial Year</div>
<div class="a" style="left:957px;top:249px;width:13px;height:13px;background:linear-gradient(#e6eef6,#cbd9e8);border:1px solid #3d5676"></div>
<svg style="left:959px;top:251px" width="9" height="9"><path d="M1.2 4.5L3.6 7.3L7.8 1.8" fill="none" stroke="#111" stroke-width="2"/></svg>
<div class="t" style="top:249.2px;font-size:12px;color:#111;left:972.7px;transform:scaleX(0.944);">Enable Allocation Tag</div>
<div class="a" style="left:806px;top:225px;width:130px;height:36px;background:linear-gradient(#f2f2f2 0%,#ebebeb 50%,#dedede 51%,#d8d8d8 100%);border:1px solid #8c8c8c;border-radius:3px"></div>
<svg style="left:807px;top:234px" width="17" height="17"><circle cx="10.5" cy="6.5" r="5" fill="#d8ecfa" stroke="#5a8fc0" stroke-width="1.6"/><path d="M7 10L1.5 15.5" stroke="#c0805a" stroke-width="2.6" stroke-linecap="round"/></svg>
<div class="t" style="top:237.1px;font-size:12px;font-weight:bold;color:#111;left:833.7px;transform:scaleX(0.995);">Show Report</div>
<div class="a" style="left:1119px;top:160px;width:249px;height:110px;border:1px solid #a8a8a8"></div>
<div class="a" style="left:1127px;top:155px;width:79px;height:10px;background:#fff"></div>
<div class="t" style="top:156.1px;font-size:12px;color:#111;left:1129.8px;transform:scaleX(0.912);">Allocation Tags</div>
<div class="t" style="top:179.7px;font-size:12px;color:#111;left:1135.8px;transform:scaleX(0.981);">Outlet</div>
<div class="a" style="left:1201px;top:176px;width:167px;height:20px;background:#fff;border:1px solid #dadada;border-radius:2px"></div>
<svg style="left:1353px;top:184.0px" width="9" height="5"><path d="M0 0H9L4.5 5Z" fill="#111"/></svg>
<div class="t" style="top:179.7px;font-size:12px;color:#111;left:1205.2px;transform:scaleX(0.918);">None</div>
<div class="t" style="top:202.3px;font-size:12px;color:#111;left:1133.6px;transform:scaleX(1.003);">Area</div>
<div class="a" style="left:1201px;top:199px;width:167px;height:20px;background:#fff;border:1px solid #dadada;border-radius:2px"></div>
<svg style="left:1353px;top:207.0px" width="9" height="5"><path d="M0 0H9L4.5 5Z" fill="#111"/></svg>
<div class="t" style="top:202.3px;font-size:12px;color:#111;left:1205.2px;transform:scaleX(0.918);">None</div>
<div class="t" style="top:224.1px;font-size:12px;color:#111;left:1134.9px;transform:scaleX(0.923);">Sales Man</div>
<div class="a" style="left:1201px;top:222px;width:167px;height:20px;background:#fff;border:1px solid #dadada;border-radius:2px"></div>
<svg style="left:1353px;top:230.0px" width="9" height="5"><path d="M0 0H9L4.5 5Z" fill="#111"/></svg>
<div class="t" style="top:225.4px;font-size:12px;color:#111;left:1205.2px;transform:scaleX(0.918);">None</div>
<div class="t" style="top:244.6px;font-size:12px;color:#111;left:1136.3px;transform:scaleX(0.986);">Division</div>
<div class="a" style="left:1201px;top:244px;width:167px;height:20px;background:#fff;border:1px solid #dadada;border-radius:2px"></div>
<svg style="left:1353px;top:252.0px" width="9" height="5"><path d="M0 0H9L4.5 5Z" fill="#111"/></svg>
<div class="t" style="top:247.6px;font-size:12px;color:#111;left:1205.2px;transform:scaleX(0.918);">None</div>
<div class="a" style="left:323px;top:273px;width:1272px;height:595px;background:#f0f0f0;border-top:1px solid #6e6e6e;border-left:1px solid #c9c9c9;border-right:1px solid #666"></div>
<div class="a" style="left:324px;top:274px;width:1270px;height:27px;background:linear-gradient(#fdfdfd,#f6f6f6 60%,#f0f0f0)"></div>
<svg style="left:329px;top:280px" width="20" height="17"><path d="M2.5 9.5H17.5L19 15.5H1Z" fill="#d6ecf8" stroke="#3f86b0" stroke-width="1.2"/><path d="M4 13H16" stroke="#3f86b0" stroke-width="1"/><path d="M8.5 9V4.5H14" fill="none" stroke="#3f86b0" stroke-width="1.6"/><path d="M13 1.5L16.5 4.5L13 7.5Z" fill="#3f86b0"/></svg>
<svg style="left:357px;top:279px" width="19" height="16"><path d="M5 1H14L15 6H4Z" fill="#eef4f8" stroke="#8a9aa6" stroke-width="1"/><path d="M1.5 6.5H16.5Q18 6.5 18 8V14.5H1V8Q1 6.5 1.5 6.5Z" fill="#dfe8ee" stroke="#7d8f9c" stroke-width="1"/><rect x="12" y="9" width="5" height="4" fill="#3a8a8a"/><path d="M2 11H11" stroke="#aab" stroke-width="1"/></svg>
<div class="a" style="left:383px;top:279px;width:1px;height:18px;background:#c8c8c8"></div>
<svg style="left:389px;top:276px" width="22" height="24"><rect x="1.5" y="1.5" width="8.5" height="6" fill="#a8c4e6" stroke="#3a5a8a" stroke-width="1"/><path d="M4.5 8V20.5H12.5M4.5 12.5H12.5" fill="none" stroke="#2a3a4a" stroke-width="1.3"/><rect x="12.5" y="9.5" width="7" height="5" fill="#f4b74a" stroke="#c88a20" stroke-width="1"/><rect x="12.5" y="17.5" width="7" height="5" fill="#f4b74a" stroke="#c88a20" stroke-width="1"/></svg>
<div class="a" style="left:417px;top:279px;width:1px;height:18px;background:#c8c8c8"></div>
<svg style="left:429px;top:283px" width="8" height="9"><rect x="0" y="0" width="1.6" height="9" fill="#a9a9a9"/><path d="M7.5 0V9L2 4.5Z" fill="#a9a9a9"/></svg>
<svg style="left:456px;top:283px" width="8" height="9"><path d="M7 0V9L1 4.5Z" fill="#a9a9a9"/></svg>
<svg style="left:487px;top:283px" width="8" height="9"><path d="M0.5 0V9L6.5 4.5Z" fill="#4d4d4d"/></svg>
<svg style="left:514px;top:283px" width="8" height="9"><path d="M0.5 0V9L6 4.5Z" fill="#4d4d4d"/><rect x="6" y="0" width="1.6" height="9" fill="#4d4d4d"/></svg>
<div class="a" style="left:535px;top:279px;width:1px;height:18px;background:#c8c8c8"></div>
<div class="a" style="left:538px;top:277px;width:101px;height:22px;background:#fff"></div>
<div class="t" style="top:280.4px;font-size:12px;color:#111;left:542.4px;">1</div>
<div class="t" style="top:281.1px;font-size:13px;color:#111;left:643.7px;transform:scaleX(1.109);">/2</div>
<svg style="left:663px;top:279px" width="17" height="17"><path d="M10 10L15.5 15.5" stroke="#c79a6a" stroke-width="2.4" stroke-linecap="round"/><circle cx="6.5" cy="6.5" r="5.3" fill="#bfe4fa" stroke="#3a86c8" stroke-width="1.3"/><path d="M6.5 3.5V9.5M3.5 6.5H9.5" stroke="#1a5aa8" stroke-width="1.6"/></svg>
<svg style="left:684px;top:286px" width="7" height="4"><path d="M0 0H7L3.5 4Z" fill="#111"/></svg>
<div class="a" style="left:326px;top:302px;width:69px;height:20px;background:#f4f4f4;border-top:2px solid #7c7c7c;border-left:1px solid #9a9a9a;border-right:1px solid #dedede;border-bottom:1px solid #e4e4e4"></div>
<div class="t" style="top:306.5px;font-size:12px;color:#111;left:332.2px;transform:scaleX(0.907);">Main Report</div>
<div class="a" style="left:400px;top:302px;width:1px;height:21px;background:#d0d0d0"></div>
<div class="a" style="left:328px;top:327px;width:1262px;height:515px;background:#ababab;border-left:6px solid #a2a2a2;border-top:1px solid #606060;border-bottom:1px solid #5a5a5a"></div>
<div class="a" style="left:349px;top:338px;width:1201px;height:502px;background:#fff;border-left:1px solid #000;border-top:1px solid #000"></div>
<div class="a" style="left:1549px;top:343px;width:5px;height:497px;background:#000"></div>
<div class="a" style="left:1572px;top:327px;width:18px;height:514px;background:#e8e8e8;border-left:1px solid #d8d8d8;border-top:1px solid #606060;border-right:1px solid #606060;border-bottom:1px solid #5a5a5a"></div>
<div class="a" style="left:1573px;top:345px;width:16px;height:290px;background:#c6c6c6"></div>
<svg style="left:1576px;top:333px" width="9" height="6"><path d="M0.8 5L4.5 1.2L8.2 5" fill="none" stroke="#333" stroke-width="1.4"/></svg>
<svg style="left:1576px;top:828px" width="9" height="6"><path d="M0.8 1L4.5 4.8L8.2 1" fill="none" stroke="#333" stroke-width="1.4"/></svg>
<div class="a" style="left:324px;top:847px;width:1268px;height:19px;background:#f0f0f0;border-top:1px solid #a8a8a8;border-left:1px solid #a0a0a0;border-bottom:1px solid #5a5a5a;border-right:1px solid #dcdcdc"></div>
<div class="a" style="left:746px;top:847px;width:3px;height:18px;border-left:1px solid #d6d6d6;border-right:1px solid #9a9a9a"></div>
<div class="a" style="left:1169px;top:847px;width:3px;height:18px;border-left:1px solid #d6d6d6;border-right:1px solid #9a9a9a"></div>
<div class="t" style="top:850.0px;font-size:12px;color:#111;left:325.9px;transform:scaleX(0.969);">Current Page No.: 1</div>
<div class="t" style="top:850.0px;font-size:12px;color:#111;left:750.9px;transform:scaleX(0.982);">Total Page No.: 2</div>
<div class="t" style="top:850.0px;font-size:12px;color:#111;left:1173.9px;transform:scaleX(0.972);">Zoom Factor: 100%</div>
<div class="t" style="top:373.4px;font-size:15px;font-weight:bold;color:#000;left:922.4px;transform:scaleX(1.033);">ali Stores</div>
<div class="t" style="top:414.2px;font-size:15.5px;font-weight:bold;color:#000;left:760.1px;transform:scaleX(1.032);">Ledger</div>
<div class="t" style="top:414.2px;font-size:15.5px;font-weight:bold;color:#000;left:824.2px;transform:scaleX(0.984);">From</div>
<div class="t" style="top:414.2px;font-size:15.5px;font-weight:bold;color:#000;left:867.4px;transform:scaleX(1.038);">01-Jan-2021</div>
<div class="t" style="top:414.2px;font-size:15.5px;font-weight:bold;color:#000;left:968.3px;transform:scaleX(1.054);">To</div>
<div class="t" style="top:414.2px;font-size:15.5px;font-weight:bold;color:#000;left:995.3px;transform:scaleX(1.048);">31-Dec-2021</div>
<div class="a" style="left:374px;top:483px;width:1152px;height:30px;background:#dedede;border-radius:7px"></div>
<div class="t" style="top:491.6px;font-size:12.5px;font-weight:bold;color:#111;left:380.9px;transform:scaleX(0.996);">Date</div>
<div class="t" style="top:491.6px;font-size:12.5px;font-weight:bold;color:#111;left:452.3px;transform:scaleX(0.968);">Voucher No</div>
<div class="t" style="top:491.6px;font-size:12.5px;font-weight:bold;color:#111;left:571.3px;transform:scaleX(1.066);">Mode</div>
<div class="t" style="top:491.6px;font-size:12.5px;font-weight:bold;color:#111;left:652.4px;transform:scaleX(0.991);">Cheque#/Date</div>
<div class="t" style="top:491.6px;font-size:12.5px;font-weight:bold;color:#111;left:785.5px;transform:scaleX(1.072);">Ref</div>
<div class="t" style="top:491.6px;font-size:12.5px;font-weight:bold;color:#111;left:972.5px;transform:scaleX(0.984);">Narration</div>
<div class="t" style="top:491.6px;font-size:12.5px;font-weight:bold;color:#111;right:331.4px;transform-origin:100% 50%;transform:scaleX(1.029);">Debit</div>
<div class="t" style="top:491.6px;font-size:12.5px;font-weight:bold;color:#111;right:210.5px;transform-origin:100% 50%;transform:scaleX(0.991);">Credit</div>
<div class="t" style="top:491.6px;font-size:12.5px;font-weight:bold;color:#111;right:81.4px;transform-origin:100% 50%;transform:scaleX(0.906);">Balance</div>
<div class="t" style="top:516.4px;font-size:11.5px;font-weight:bold;color:#111;left:372.6px;transform:scaleX(0.907);">Account (Test Bank)</div>
<div class="t" style="top:533.2px;font-size:11.5px;color:#111;left:372.6px;transform:scaleX(0.940);">2504001</div>
<div class="t" style="top:530.6px;font-size:11.5px;font-style:italic;color:#222;left:972.5px;transform:scaleX(0.935);">Brought Forward Balance</div>
<div class="t" style="top:529.3px;font-size:11.5px;color:#111;right:86.7px;transform-origin:100% 50%;transform:scaleX(0.952);">0.00</div>
<div class="a" style="left:373px;top:562.0px;width:1153px;height:1px;background:#b9b9b9"></div>
<div class="a" style="left:373px;top:603.0px;width:1153px;height:1px;background:#b9b9b9"></div>
<div class="a" style="left:373px;top:644.5px;width:1153px;height:1px;background:#b9b9b9"></div>
<div class="a" style="left:373px;top:685.5px;width:1153px;height:1px;background:#b9b9b9"></div>
<div class="a" style="left:373px;top:727.0px;width:1153px;height:1px;background:#b9b9b9"></div>
<div class="a" style="left:373px;top:768.5px;width:1153px;height:1px;background:#b9b9b9"></div>
<div class="a" style="left:373px;top:809.5px;width:1153px;height:1px;background:#b9b9b9"></div>
<div class="t" style="top:573.8px;font-size:12px;color:#1a1a1a;left:372.3px;transform:scaleX(0.900);">28-Oct-2021</div>
<div class="t" style="top:573.8px;font-size:12px;color:#4646bb;left:444.7px;transform:scaleX(0.890);">PVC-21-000003</div>
<div class="t" style="top:576.6px;font-size:11.5px;color:#1a1a1a;left:585.3px;transform:scaleX(0.879);">Cash</div>
<div class="t" style="top:572.2px;font-size:11.5px;color:#1a1a1a;left:764.0px;transform:scaleX(0.900);">0</div>
<div class="t" style="top:576.9px;font-size:11.5px;color:#1a1a1a;left:972.5px;transform:scaleX(0.900);">general</div>
<div class="t" style="top:576.9px;font-size:11.5px;color:#1a1a1a;right:321.5px;transform-origin:100% 50%;transform:scaleX(0.900);">0.00</div>
<div class="t" style="top:576.9px;font-size:11.5px;color:#1a1a1a;right:207.5px;transform-origin:100% 50%;transform:scaleX(0.900);">78.00</div>
<div class="t" style="top:578.3px;font-size:11.5px;color:#1a1a1a;right:75.0px;transform-origin:100% 50%;transform:scaleX(0.900);">(78.00)</div>
<div class="t" style="top:614.8px;font-size:12px;color:#1a1a1a;left:372.3px;transform:scaleX(0.900);">04-Nov-2021</div>
<div class="t" style="top:614.8px;font-size:12px;color:#4646bb;left:444.7px;transform:scaleX(0.890);">PVC-21-000005</div>
<div class="t" style="top:617.6px;font-size:11.5px;color:#1a1a1a;left:585.3px;transform:scaleX(0.879);">Cash</div>
<div class="t" style="top:613.2px;font-size:11.5px;color:#1a1a1a;left:764.0px;transform:scaleX(0.900);">0</div>
<div class="t" style="top:617.9px;font-size:11.5px;color:#1a1a1a;left:894.0px;transform:scaleX(0.900);">bank</div>
<div class="t" style="top:617.9px;font-size:11.5px;color:#1a1a1a;right:321.5px;transform-origin:100% 50%;transform:scaleX(0.900);">0.00</div>
<div class="t" style="top:617.9px;font-size:11.5px;color:#1a1a1a;right:207.5px;transform-origin:100% 50%;transform:scaleX(0.900);">2,000.00</div>
<div class="t" style="top:619.3px;font-size:11.5px;color:#1a1a1a;right:75.0px;transform-origin:100% 50%;transform:scaleX(0.900);">(2,078.00)</div>
<div class="t" style="top:656.3px;font-size:12px;color:#1a1a1a;left:372.3px;transform:scaleX(0.900);">04-Nov-2021</div>
<div class="t" style="top:656.3px;font-size:12px;color:#4646bb;left:444.7px;transform:scaleX(0.890);">RVC-21-000001</div>
<div class="t" style="top:659.1px;font-size:11.5px;color:#1a1a1a;left:585.3px;transform:scaleX(0.879);">Cash</div>
<div class="t" style="top:654.7px;font-size:11.5px;color:#1a1a1a;left:764.0px;transform:scaleX(0.900);">34</div>
<div class="t" style="top:670.2px;font-size:11.5px;color:#1a1a1a;left:636.4px;transform:scaleX(0.960);">04-Nov-2021</div>
<div class="t" style="top:659.4px;font-size:11.5px;color:#1a1a1a;right:321.5px;transform-origin:100% 50%;transform:scaleX(0.900);">7,875.00</div>
<div class="t" style="top:659.4px;font-size:11.5px;color:#1a1a1a;right:207.5px;transform-origin:100% 50%;transform:scaleX(0.900);">0.00</div>
<div class="t" style="top:660.8px;font-size:11.5px;color:#1a1a1a;right:78.0px;transform-origin:100% 50%;transform:scaleX(0.900);">5,797.00</div>
<div class="t" style="top:697.3px;font-size:12px;color:#1a1a1a;left:372.3px;transform:scaleX(0.900);">04-Nov-2021</div>
<div class="t" style="top:697.3px;font-size:12px;color:#4646bb;left:444.7px;transform:scaleX(0.890);">RVC-21-000002</div>
<div class="t" style="top:700.1px;font-size:11.5px;color:#1a1a1a;left:585.3px;transform:scaleX(0.879);">Cash</div>
<div class="t" style="top:695.7px;font-size:11.5px;color:#1a1a1a;left:764.0px;transform:scaleX(0.900);">74</div>
<div class="t" style="top:711.2px;font-size:11.5px;color:#1a1a1a;left:636.4px;transform:scaleX(0.960);">04-Nov-2021</div>
<div class="t" style="top:700.4px;font-size:11.5px;color:#1a1a1a;right:321.5px;transform-origin:100% 50%;transform:scaleX(0.900);">525.00</div>
<div class="t" style="top:700.4px;font-size:11.5px;color:#1a1a1a;right:207.5px;transform-origin:100% 50%;transform:scaleX(0.900);">0.00</div>
<div class="t" style="top:701.8px;font-size:11.5px;color:#1a1a1a;right:78.0px;transform-origin:100% 50%;transform:scaleX(0.900);">6,322.00</div>
<div class="t" style="top:738.8px;font-size:12px;color:#1a1a1a;left:372.3px;transform:scaleX(0.900);">04-Nov-2021</div>
<div class="t" style="top:738.8px;font-size:12px;color:#4646bb;left:444.7px;transform:scaleX(0.890);">RVC-21-000003</div>
<div class="t" style="top:741.6px;font-size:11.5px;color:#1a1a1a;left:585.3px;transform:scaleX(0.879);">Cash</div>
<div class="t" style="top:737.2px;font-size:11.5px;color:#1a1a1a;left:764.0px;transform:scaleX(0.900);">85</div>
<div class="t" style="top:752.7px;font-size:11.5px;color:#1a1a1a;left:636.4px;transform:scaleX(0.960);">04-Nov-2021</div>
<div class="t" style="top:741.9px;font-size:11.5px;color:#1a1a1a;right:321.5px;transform-origin:100% 50%;transform:scaleX(0.900);">800.00</div>
<div class="t" style="top:741.9px;font-size:11.5px;color:#1a1a1a;right:207.5px;transform-origin:100% 50%;transform:scaleX(0.900);">0.00</div>
<div class="t" style="top:743.3px;font-size:11.5px;color:#1a1a1a;right:78.0px;transform-origin:100% 50%;transform:scaleX(0.900);">7,122.00</div>
<div class="t" style="top:780.3px;font-size:12px;color:#1a1a1a;left:372.3px;transform:scaleX(0.900);">04-Nov-2021</div>
<div class="t" style="top:780.3px;font-size:12px;color:#4646bb;left:444.7px;transform:scaleX(0.890);">PVC-21-000006</div>
<div class="t" style="top:783.1px;font-size:11.5px;color:#1a1a1a;left:585.3px;transform:scaleX(0.879);">Cash</div>
<div class="t" style="top:778.7px;font-size:11.5px;color:#1a1a1a;left:764.0px;transform:scaleX(0.900);">0</div>
<div class="t" style="top:783.4px;font-size:11.5px;color:#1a1a1a;right:321.5px;transform-origin:100% 50%;transform:scaleX(0.900);">0.00</div>
<div class="t" style="top:783.4px;font-size:11.5px;color:#1a1a1a;right:207.5px;transform-origin:100% 50%;transform:scaleX(0.900);">4,000.00</div>
<div class="t" style="top:784.8px;font-size:11.5px;color:#1a1a1a;right:78.0px;transform-origin:100% 50%;transform:scaleX(0.900);">3,122.00</div>
<div class="t" style="top:821.3px;font-size:12px;color:#1a1a1a;left:372.3px;transform:scaleX(0.900);">04-Nov-2021</div>
<div class="t" style="top:821.3px;font-size:12px;color:#4646bb;left:444.7px;transform:scaleX(0.890);">PVC-21-000007</div>
<div class="t" style="top:824.1px;font-size:11.5px;color:#1a1a1a;left:585.3px;transform:scaleX(0.879);">Cash</div>
<div class="t" style="top:819.7px;font-size:11.5px;color:#1a1a1a;left:764.0px;transform:scaleX(0.900);">0</div>
<div class="t" style="top:824.4px;font-size:11.5px;color:#1a1a1a;right:321.5px;transform-origin:100% 50%;transform:scaleX(0.900);">0.00</div>
<div class="t" style="top:824.4px;font-size:11.5px;color:#1a1a1a;right:207.5px;transform-origin:100% 50%;transform:scaleX(0.900);">500.00</div>
<div class="t" style="top:825.8px;font-size:11.5px;color:#1a1a1a;right:78.0px;transform-origin:100% 50%;transform:scaleX(0.900);">2,622.00</div>
</body></html>
